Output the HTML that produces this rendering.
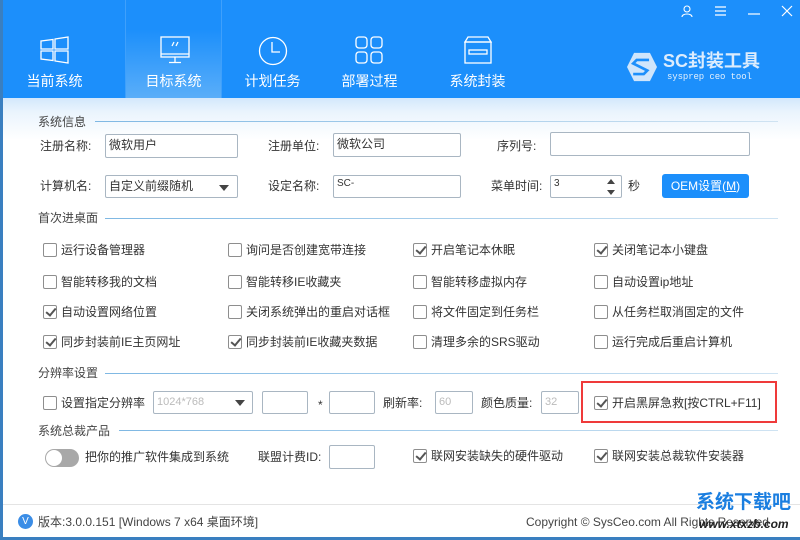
<!DOCTYPE html>
<html><head><meta charset="utf-8"><style>
*{margin:0;padding:0;box-sizing:border-box}
body{width:800px;height:540px;overflow:hidden;position:relative;font-family:"Liberation Sans","Noto Sans CJK SC",sans-serif;font-size:12px;color:#333;background:#3a7fc0}
#win{position:absolute;left:3px;top:0;width:797px;height:537px;background:linear-gradient(#d3e8fc 98px,#eaf4fd 112px,#fff 140px,#fff);}
#hdr{position:absolute;left:0;top:0;width:797px;height:98px;background:#1c8ffb}
.tab{position:absolute;top:0;height:98px;width:97px;color:#fff;font-size:14px;text-align:center}
.tab span{position:absolute;left:0;right:0;top:72px;line-height:18px}
.tab svg{position:absolute;top:36px;left:34px}
.sel{background:linear-gradient(#1c8ffb 30%,#5aaef9);border-left:1px solid #3fa0fb;border-right:1px solid #3fa0fb}
.a{position:absolute;white-space:nowrap}
.in{position:absolute;background:#fff;border:1px solid #a9b6c2;border-radius:2px;font-size:12px;padding:0 3px;color:#333;line-height:20px}
.sec{position:absolute;left:35px;font-size:12px;line-height:16px;color:#444}
.line{position:absolute;height:1px;background:linear-gradient(90deg,#7fb8e3,#cfe3f2)}
.cb{position:absolute;width:14px;height:14px;border:1px solid #8e8e8e;border-radius:2px;background:#fff}
.cb.c::after{content:"";position:absolute;left:4px;top:0px;width:4px;height:8px;border-right:2px solid #555;border-bottom:2px solid #555;transform:rotate(40deg)}
.lb{position:absolute;white-space:nowrap;font-size:12px;line-height:16px;color:#333}
.sm{font-size:11px;color:#bbb;line-height:20px}
</style></head><body><div id="win">
<div id="hdr">
<div class="tab" style="left:3px"><svg width="30" height="28" viewBox="0 0 30 28" fill="none" stroke="#fff" stroke-width="1.3"><path d="M1 5 L13 3.5 V13 H1Z M15 3 L28 1 V13 H15Z M1 15 H13 V24.5 L1 23Z M15 15 H28 V27 L15 25Z"/></svg><span>当前系统</span></div>
<div class="tab sel" style="left:122px"><svg width="30" height="28" viewBox="0 0 30 28" fill="none" stroke="#fff" stroke-width="1.3"><rect x="1" y="1" width="28" height="20"/><path d="M1 18H29M15 21V26M9 26.5H21M14 6L12 10M18 6L16 10"/></svg><span>目标系统</span></div>
<div class="tab" style="left:221px"><svg width="30" height="30" viewBox="0 0 30 30" fill="none" stroke="#fff" stroke-width="1.3"><circle cx="15" cy="15" r="13.5"/><path d="M14 6V16H22"/></svg><span>计划任务</span></div>
<div class="tab" style="left:318px"><svg width="30" height="30" viewBox="0 0 30 30" fill="none" stroke="#fff" stroke-width="1.3"><rect x="1" y="1" width="11" height="11" rx="3"/><rect x="16" y="1" width="11" height="11" rx="3"/><rect x="1" y="16" width="11" height="11" rx="3"/><rect x="16" y="16" width="11" height="11" rx="3"/></svg><span>部署过程</span></div>
<div class="tab" style="left:426px"><svg width="30" height="30" viewBox="0 0 30 30" fill="none" stroke="#fff" stroke-width="1.3"><path d="M5 1H25L28 6H2Z"/><rect x="2" y="6" width="26" height="21"/><rect x="6" y="14" width="18" height="4"/></svg><span>系统封装</span></div>
<svg style="position:absolute;left:623px;top:52px" width="32" height="30" viewBox="0 0 36 34"><path d="M9 1H27L35 17L27 33H9L1 17Z" fill="#cfe5fb"/><path d="M26 9H12L8 13L24 21L20 25H8" fill="none" stroke="#1c8ffb" stroke-width="3"/></svg>
<div class="a" style="left:660px;top:50px;color:#dcecfd;font-size:18px;font-weight:bold;line-height:22px">SC封装工具</div>
<div class="a" style="left:664px;top:72px;color:#e4f0fd;font-size:9px;line-height:11px;font-family:'Liberation Mono',monospace;letter-spacing:-0.1px">sysprep ceo tool</div>
<svg style="position:absolute;left:678px;top:5px" width="12" height="12" viewBox="0 0 12 12" fill="none" stroke="#fff" stroke-width="1.1"><circle cx="6" cy="4" r="3"/><path d="M1 12C1 8 11 8 11 12"/></svg>
<svg style="position:absolute;left:712px;top:6px" width="12" height="10" stroke="#fff" stroke-width="1.2"><path d="M0 1H11M0 5H11M0 9H11"/></svg>
<svg style="position:absolute;left:744px;top:6px" width="14" height="10" stroke="#fff" stroke-width="1.2"><path d="M1 8H13"/></svg>
<svg style="position:absolute;left:778px;top:5px" width="12" height="12" stroke="#fff" stroke-width="1.2"><path d="M1 1L11 11M11 1L1 11"/></svg>
</div>

<div class="sec" style="top:114px">系统信息</div><div class="line" style="left:92px;top:121px;width:683px"></div>
<div class="lb" style="left:37px;top:138px">注册名称:</div><div class="in" style="left:102px;top:134px;width:133px;height:24px;line-height:20px">微软用户</div>
<div class="lb" style="left:265px;top:138px">注册单位:</div><div class="in" style="left:330px;top:133px;width:128px;height:24px">微软公司</div>
<div class="lb" style="left:494px;top:138px">序列号:</div><div class="in" style="left:547px;top:132px;width:200px;height:24px"></div>
<div class="lb" style="left:37px;top:178px">计算机名:</div><div class="in" style="left:102px;top:175px;width:133px;height:23px">自定义前缀随机<span style="position:absolute;right:8px;top:9px;border:5px solid transparent;border-top:6px solid #444;border-bottom:0"></span></div>
<div class="lb" style="left:265px;top:178px">设定名称:</div><div class="in" style="left:330px;top:175px;width:128px;height:23px;font-size:10px;line-height:16px">SC-</div>
<div class="lb" style="left:488px;top:178px">菜单时间:</div><div class="in" style="left:547px;top:175px;width:72px;height:23px;font-size:10px;line-height:16px">3<span style="position:absolute;right:6px;top:3px;border:4px solid transparent;border-bottom:5px solid #444;border-top:0"></span><span style="position:absolute;right:6px;top:14px;border:4px solid transparent;border-top:5px solid #444;border-bottom:0"></span></div>
<div class="lb" style="left:625px;top:178px">秒</div>
<div class="a" style="left:659px;top:174px;width:87px;height:24px;background:#1c8ffb;border-radius:3px;color:#fff;font-size:12px;text-align:center;line-height:24px">OEM设置(<u>M</u>)</div>

<div class="sec" style="top:210px">首次进桌面</div><div class="line" style="left:102px;top:218px;width:673px"></div>

<div class="cb" style="left:40px;top:243px"></div><div class="lb" style="left:58px;top:242px">运行设备管理器</div>
<div class="cb" style="left:225px;top:243px"></div><div class="lb" style="left:243px;top:242px">询问是否创建宽带连接</div>
<div class="cb c" style="left:410px;top:243px"></div><div class="lb" style="left:428px;top:242px">开启笔记本休眠</div>
<div class="cb c" style="left:591px;top:243px"></div><div class="lb" style="left:609px;top:242px">关闭笔记本小键盘</div>

<div class="cb" style="left:40px;top:275px"></div><div class="lb" style="left:58px;top:274px">智能转移我的文档</div>
<div class="cb" style="left:225px;top:275px"></div><div class="lb" style="left:243px;top:274px">智能转移IE收藏夹</div>
<div class="cb" style="left:410px;top:275px"></div><div class="lb" style="left:428px;top:274px">智能转移虚拟内存</div>
<div class="cb" style="left:591px;top:275px"></div><div class="lb" style="left:609px;top:274px">自动设置ip地址</div>

<div class="cb c" style="left:40px;top:305px"></div><div class="lb" style="left:58px;top:304px">自动设置网络位置</div>
<div class="cb" style="left:225px;top:305px"></div><div class="lb" style="left:243px;top:304px">关闭系统弹出的重启对话框</div>
<div class="cb" style="left:410px;top:305px"></div><div class="lb" style="left:428px;top:304px">将文件固定到任务栏</div>
<div class="cb" style="left:591px;top:305px"></div><div class="lb" style="left:609px;top:304px">从任务栏取消固定的文件</div>

<div class="cb c" style="left:40px;top:335px"></div><div class="lb" style="left:58px;top:334px">同步封装前IE主页网址</div>
<div class="cb c" style="left:225px;top:335px"></div><div class="lb" style="left:243px;top:334px">同步封装前IE收藏夹数据</div>
<div class="cb" style="left:410px;top:335px"></div><div class="lb" style="left:428px;top:334px">清理多余的SRS驱动</div>
<div class="cb" style="left:591px;top:335px"></div><div class="lb" style="left:609px;top:334px">运行完成后重启计算机</div>

<div class="sec" style="top:365px">分辨率设置</div><div class="line" style="left:102px;top:373px;width:673px"></div>
<div class="cb" style="left:40px;top:396px"></div><div class="lb" style="left:58px;top:395px">设置指定分辨率</div>
<div class="in sm" style="left:150px;top:391px;width:100px;height:23px">1024*768<span style="position:absolute;right:7px;top:8px;border:5px solid transparent;border-top:6px solid #444;border-bottom:0"></span></div>
<div class="in" style="left:259px;top:391px;width:46px;height:23px"></div>
<div class="lb" style="left:315px;top:397px">*</div>
<div class="in" style="left:326px;top:391px;width:46px;height:23px"></div>
<div class="lb" style="left:380px;top:395px">刷新率:</div>
<div class="in sm" style="left:432px;top:391px;width:38px;height:23px">60</div>
<div class="lb" style="left:478px;top:395px">颜色质量:</div>
<div class="in sm" style="left:538px;top:391px;width:38px;height:23px">32</div>
<div class="a" style="left:578px;top:381px;width:196px;height:42px;border:2px solid #ef3a3a"></div>
<div class="cb c" style="left:591px;top:396px"></div><div class="lb" style="left:609px;top:395px">开启黑屏急救[按CTRL+F11]</div>

<div class="sec" style="top:423px">系统总裁产品</div><div class="line" style="left:116px;top:430px;width:659px"></div>
<div class="a" style="left:42px;top:449px;width:34px;height:18px;border-radius:9px;background:#a8a8a8"><div style="position:absolute;left:1px;top:1px;width:16px;height:16px;border-radius:50%;background:#fff"></div></div>
<div class="lb" style="left:82px;top:449px">把你的推广软件集成到系统</div>
<div class="lb" style="left:255px;top:449px">联盟计费ID:</div>
<div class="in" style="left:326px;top:445px;width:46px;height:24px"></div>
<div class="cb c" style="left:410px;top:449px"></div><div class="lb" style="left:428px;top:448px">联网安装缺失的硬件驱动</div>
<div class="cb c" style="left:591px;top:449px"></div><div class="lb" style="left:609px;top:448px">联网安装总裁软件安装器</div>

<div class="a" style="left:0;top:504px;width:797px;height:1px;background:#e4e4e4"></div>
<div class="a" style="left:15px;top:514px;width:15px;height:15px;border-radius:50%;background:#3b8de6;color:#fff;font-size:10px;text-align:center;line-height:15px">V</div>
<div class="lb" style="left:35px;top:514px;color:#444">版本:3.0.0.151 [Windows 7 x64 桌面环境]</div>
<div class="lb" style="left:523px;top:514px;color:#444">Copyright © SysCeo.com All Rights Reserved</div>
<div class="a" style="left:693px;top:492px;color:#1a7ee0;font-size:19px;font-weight:bold;line-height:22px">系统下载吧</div>
<div class="a" style="left:696px;top:517px;color:#222;font-size:12px;font-weight:bold;font-style:italic;line-height:14px">www.xtxzb.com</div>
</div></body></html>
